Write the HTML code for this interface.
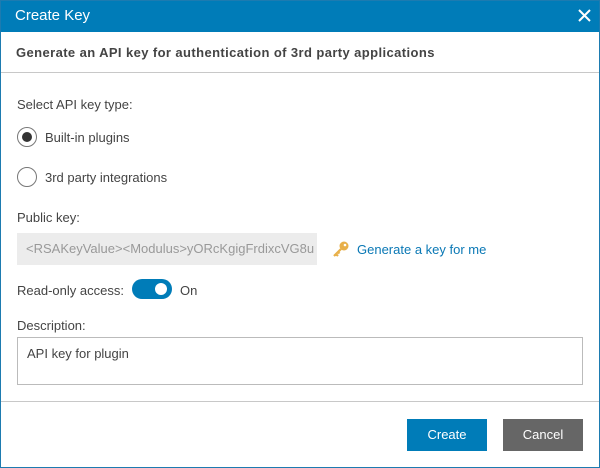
<!DOCTYPE html>
<html><head><style>
*{box-sizing:border-box;margin:0;padding:0}
body{width:600px;height:468px;background:#fff;font-family:"Liberation Sans",sans-serif;font-size:13px;color:#444;position:relative;overflow:hidden}
.frame{position:absolute;left:0;top:0;width:600px;height:468px;border:1px solid #1d7bb0}
.hdr{position:absolute;left:0;top:0;width:600px;height:32px;background:#007cb8;color:#fff;font-size:15px;padding:7px 0 0 15px}
.x{position:absolute;right:9px;top:9px}
.sub{position:absolute;left:16px;top:45px;font-weight:bold;font-size:13px;color:#444;letter-spacing:0.4px}
.line{position:absolute;left:1px;width:598px;height:1px;background:#c8c8c8}
.t{position:absolute;white-space:nowrap}
.radio{position:absolute;width:20px;height:20px;border:1px solid #777;border-radius:50%;background:#fff}
.dot{position:absolute;left:4px;top:4px;width:10px;height:10px;border-radius:50%;background:#333}
.inp{position:absolute;left:17px;top:233px;width:300px;height:32px;background:#ececec;color:#999;padding:8px 0 0 9px;overflow:hidden;white-space:nowrap}
.tog{position:absolute;left:132px;top:279px;width:40px;height:20px;border-radius:10px;background:#007cb8}
.knob{position:absolute;right:5px;top:4px;width:12px;height:12px;border-radius:50%;background:#fff}
.ta{position:absolute;left:17px;top:337px;width:566px;height:48px;border:1px solid #bbb;padding:8px 0 0 9px}
.btn{position:absolute;top:419px;width:80px;height:32px;color:#fff;text-align:center;line-height:32px;font-size:13px}
</style></head><body>
<div class="hdr">Create Key
<svg class="x" width="13" height="13" viewBox="0 0 13 13"><path d="M1 1L12 12M12 1L1 12" stroke="#fff" stroke-width="2"/></svg></div>
<div class="sub">Generate an API key for authentication of 3rd party applications</div>
<div class="line" style="top:72px"></div>
<div class="t" style="left:17px;top:97px">Select API key type:</div>
<div class="radio" style="left:17px;top:127px"><div class="dot"></div></div>
<div class="t" style="left:45px;top:130px">Built-in plugins</div>
<div class="radio" style="left:17px;top:167px"></div>
<div class="t" style="left:45px;top:170px">3rd party integrations</div>
<div class="t" style="left:17px;top:210px">Public key:</div>
<div class="inp">&lt;RSAKeyValue&gt;&lt;Modulus&gt;yORcKgigFrdixcVG8u</div>
<svg style="position:absolute;left:332px;top:240px" width="18" height="18" viewBox="0 0 18 18"><circle cx="12" cy="6" r="4.5" fill="#e8b04a"/><circle cx="13" cy="5" r="1.3" fill="#fff"/><path d="M9 9L2 16M4 14l2 2M6 12l1.5 1.5" stroke="#e8b04a" stroke-width="2.2" fill="none"/></svg>
<div class="t" style="left:357px;top:242px;color:#0a78b5">Generate a key for me</div>
<div class="t" style="left:17px;top:283px">Read-only access:</div>
<div class="tog"><div class="knob"></div></div>
<div class="t" style="left:180px;top:283px">On</div>
<div class="t" style="left:17px;top:318px">Description:</div>
<div class="ta">API key for plugin</div>
<div class="line" style="top:401px"></div>
<div class="btn" style="left:407px;background:#007cb8">Create</div>
<div class="btn" style="left:503px;background:#666">Cancel</div>
<div class="frame"></div>
</body></html>
